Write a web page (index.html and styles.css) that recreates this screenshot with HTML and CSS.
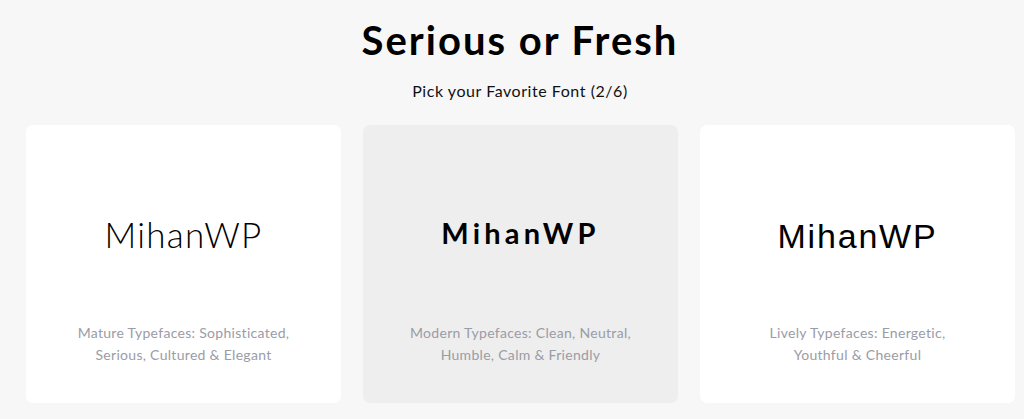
FILE: index.html
```html
<!DOCTYPE html>
<html lang="en">
<head>
    <meta charset="UTF-8">
    <title>Serious or Fresh</title>
    <link rel="stylesheet" href="styles.css">
</head>
<body>
    <div id="quiz">
        <h1 class="quiz-title">Serious or Fresh</h1>
        <p class="quiz-step">Pick your Favorite Font (2/6)</p>
        <ul class="choices">
            <li class="choice">
                <span class="sample sample-thin">MihanWP</span>
                <p class="choice-desc">Mature Typefaces: Sophisticated,<br>Serious, Cultured &amp; Elegant</p>
            </li>
            <li class="choice selected">
                <span class="sample sample-bold">MihanWP</span>
                <p class="choice-desc">Modern Typefaces: Clean, Neutral,<br>Humble, Calm &amp; Friendly</p>
            </li>
            <li class="choice">
                <span class="sample sample-plain">MihanWP</span>
                <p class="choice-desc">Lively Typefaces: Energetic,<br>Youthful &amp; Cheerful</p>
            </li>
        </ul>
    </div>
</body>
</html>
```

FILE: styles.css
```css
*{
    margin: 0;
    padding: 0;
    box-sizing: border-box;
}
ul{
    list-style: none;
}
body{
    background: #f7f7f7;
    font-family: Lato, "Open Sans", sans-serif;
    color: #000;
}
#quiz{
    padding: 16px 10px 0 26px;
    text-align: center;
}
.quiz-title{
    font-size: 40px;
    line-height: 48px;
    font-weight: 700;
    letter-spacing: 2px;
}
.quiz-step{
    margin-top: 17px;
    font-size: 16px;
    line-height: 20px;
    letter-spacing: 0.55px;
    color: #111;
}
.choices{
    margin-top: 24px;
    display: grid;
    grid-template-columns: repeat(3, 315px);
    gap: 22px;
}
.choice{
    height: 278px;
    background: #fff;
    border-radius: 7px;
    display: flex;
    flex-direction: column;
    align-items: center;
    padding: 91px 10px 37px;
    cursor: pointer;
}
.choice.selected{
    background: #eeeeee;
}
.sample{
    display: block;
    height: 40px;
    line-height: 40px;
    color: #000;
}
.sample-thin{
    margin-top: -2px;
    font-family: Lato, sans-serif;
    font-weight: 300;
    font-size: 35px;
    letter-spacing: 1.3px;
}
.sample-bold{
    margin-top: -3px;
    font-family: Lato, sans-serif;
    font-weight: 700;
    font-size: 29px;
    letter-spacing: 4.2px;
}
.sample-plain{
    font-family: "Liberation Sans", Arial, sans-serif;
    font-size: 34px;
    letter-spacing: 1.8px;
}
.choice-desc{
    margin-top: auto;
    font-size: 14px;
    line-height: 22px;
    letter-spacing: 0.3px;
    color: #9a9ca6;
}
```
